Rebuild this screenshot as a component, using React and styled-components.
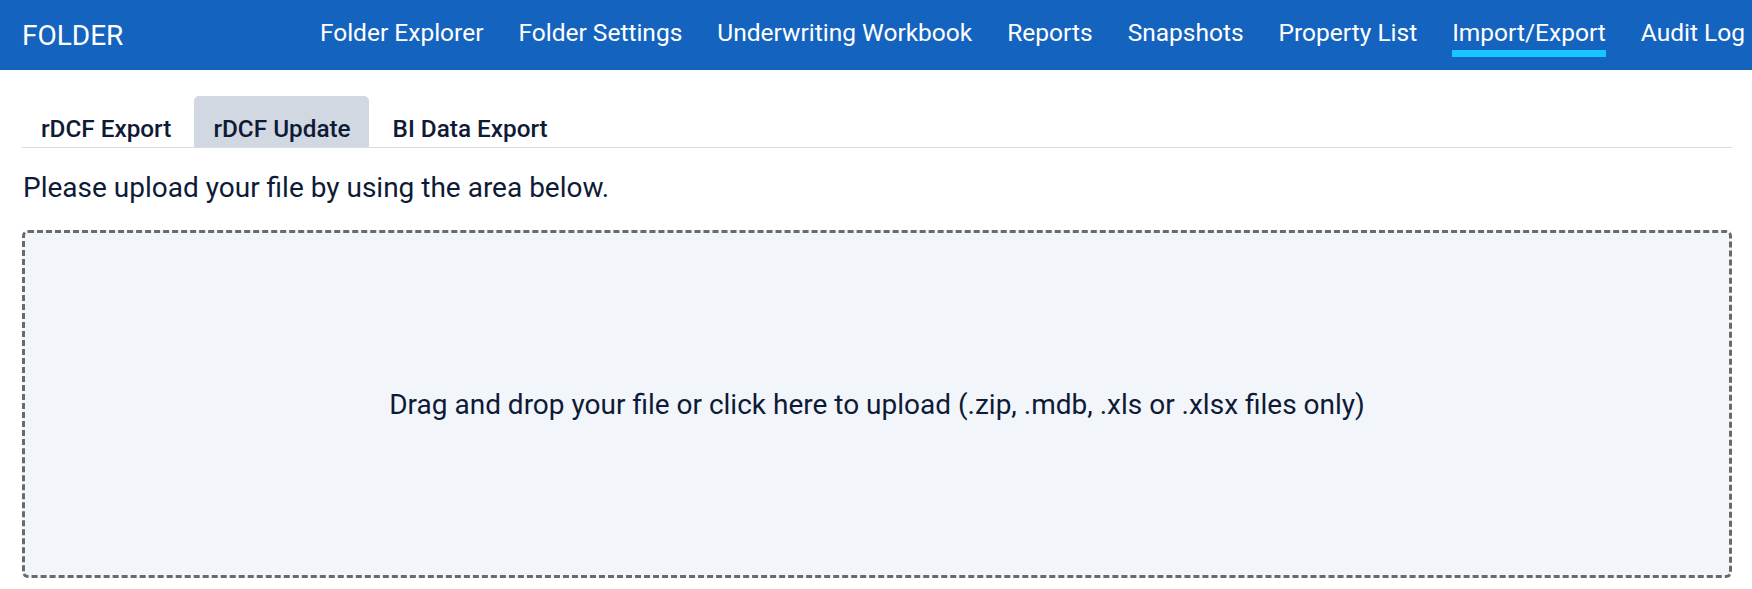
import React, { useState } from "react";
import styled, { createGlobalStyle } from "styled-components";

const GlobalStyle = createGlobalStyle`
  html, body {
    margin: 0;
    padding: 0;
    background: #ffffff;
    font-family: Roboto, "Liberation Sans", Arial, sans-serif;
    overflow: hidden;
  }
  * {
    box-sizing: border-box;
  }
`;

// header
const Header = styled.header`
  height: 70px;
  background: #1463bf;
  display: flex;
  align-items: center;
  padding: 0 7px 0 22px;
  color: #ffffff;
`;

const Brand = styled.div`
  font-size: 28px;
  font-weight: 400;
  margin-top: 1px;
`;

const Nav = styled.nav`
  margin-left: auto;
  display: flex;
  gap: 35px;
  align-self: stretch;
`;

const NavItem = styled.a`
  position: relative;
  display: flex;
  align-items: center;
  padding-bottom: 6px;
  font-size: 24.5px;
  color: #ffffff;
  text-decoration: none;
  cursor: pointer;

  &::after {
    content: "";
    position: absolute;
    left: 0;
    right: 0;
    top: 50px;
    height: 7px;
    background: ${(p) => (p.$active ? "#17c6ff" : "transparent")};
  }
`;

// content
const Content = styled.main`
  padding: 26px 20px 0 22px;
`;

const TabBar = styled.div`
  display: flex;
  gap: 5px;
  border-bottom: 1px solid #dcdcdc;
`;

const Tab = styled.button`
  height: 51px;
  padding: 14px 18px 0 19px;
  border: none;
  border-radius: 5px 5px 0 0;
  background: ${(p) => (p.$active ? "#d1d8e2" : "transparent")};
  font-family: inherit;
  font-size: 24.3px;
  font-weight: 500;
  color: #0e1a36;
  cursor: pointer;
`;

const Instruction = styled.p`
  margin: 22px 0 24px 1px;
  font-size: 28px;
  line-height: 36px;
  color: #0e1a36;
`;

const DropZone = styled.div`
  height: 348px;
  border: 3px dashed #6a6a6a;
  border-radius: 6px;
  background: #f2f5fa;
  display: flex;
  align-items: center;
  justify-content: center;
  font-size: 28px;
  color: #0e1a36;
  cursor: pointer;
`;

const navItems = [
  "Folder Explorer",
  "Folder Settings",
  "Underwriting Workbook",
  "Reports",
  "Snapshots",
  "Property List",
  "Import/Export",
  "Audit Log",
];

const tabs = ["rDCF Export", "rDCF Update", "BI Data Export"];

const App = () => {
  const [tab, setTab] = useState("rDCF Update");

  return (
    <>
      <GlobalStyle />
      <Header>
        <Brand>FOLDER</Brand>
        <Nav>
          {navItems.map((item) => (
            <NavItem key={item} $active={item === "Import/Export"}>
              {item}
            </NavItem>
          ))}
        </Nav>
      </Header>
      <Content>
        <TabBar>
          {tabs.map((t) => (
            <Tab key={t} $active={t === tab} onClick={() => setTab(t)}>
              {t}
            </Tab>
          ))}
        </TabBar>
        <Instruction>Please upload your file by using the area below.</Instruction>
        <DropZone>
          Drag and drop your file or click here to upload (.zip, .mdb, .xls or .xlsx files only)
        </DropZone>
      </Content>
    </>
  );
};

export default App;
